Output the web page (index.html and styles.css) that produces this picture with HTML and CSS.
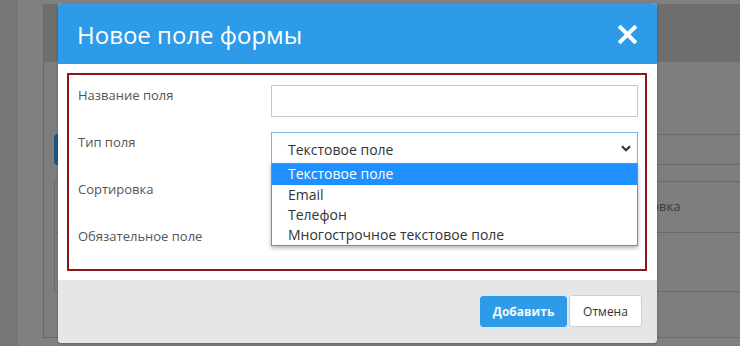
FILE: index.html
```html
<!DOCTYPE html>
<html lang="ru">
<head>
<meta charset="utf-8">
<title>Новое поле формы</title>
<link rel="stylesheet" href="styles.css">
</head>
<body>
<div class="page">
  <div class="sidebar"></div>
  <div class="main">
    <div class="panel">
      <div class="panel-head"></div>
      <div class="panel-body">
        <div class="tabs"><div class="tab-active"></div><div class="tab-rest"></div></div>
        <div class="table">
          <div class="trow trow-head"><div class="tcell tcell-first"></div><div class="tcell">Сортировка</div></div>
          <div class="trow trow-body"></div>
        </div>
      </div>
    </div>
  </div>
</div>

<div class="modal">
  <div class="modal-head">
    <h1 class="modal-title">Новое поле формы</h1>
    <button class="close" type="button" aria-label="Закрыть">
      <svg width="19" height="19" viewBox="0 0 19 19"><path d="M2.5 2.5 L16.5 16.5 M16.5 2.5 L2.5 16.5" stroke="#fff" stroke-width="4" stroke-linecap="square" fill="none"/></svg>
    </button>
  </div>
  <div class="modal-body">
    <div class="form-box">
      <div class="form-row"><label class="label">Название поля</label><input class="control" type="text"></div>
      <div class="form-row">
        <label class="label">Тип поля</label>
        <div class="select-wrap">
          <div class="control select"><span>Текстовое поле</span>
            <svg class="chev" width="10" height="7" viewBox="0 0 10 7"><path d="M1 1.2 L5 5.2 L9 1.2" stroke="#333" stroke-width="2.2" fill="none"/></svg>
          </div>
          <ul class="options">
            <li class="option option-active">Текстовое поле</li>
            <li class="option">Email</li>
            <li class="option">Телефон</li>
            <li class="option">Многострочное текстовое поле</li>
          </ul>
        </div>
      </div>
      <div class="form-row"><label class="label">Сортировка</label><input class="control" type="text"></div>
      <div class="form-row"><label class="label">Обязательное поле</label><div class="check-cell"><input class="check" type="checkbox"></div></div>
    </div>
  </div>
  <div class="modal-foot">
    <button class="btn btn-primary" type="button">Добавить</button>
    <button class="btn btn-default" type="button">Отмена</button>
  </div>
</div>
</body>
</html>
```

FILE: styles.css
```css
* { box-sizing: border-box; }
html, body { margin: 0; padding: 0; }
body {
  font-family: "Open Sans", "Liberation Sans", sans-serif;
  width: 740px;
  height: 346px;
  overflow: hidden;
  background: #808080;
  position: relative;
}

/* dimmed background page */
.page { display: flex; height: 346px; }
.sidebar { width: 18px; background: #767676; flex: none; }
.main { flex: 1; padding: 4px 0 0 25px; background: #808080; }
.panel {
  height: 334px;
  border-left: 1px solid #6a6a6a;
  border-bottom: 1px solid #6a6a6a;
  background: #7e7e7e;
}
.panel-head { height: 58px; background: #6e6e6e; }
.panel-body { padding: 72px 0 0 10px; }
.tabs { display: flex; height: 31px; }
.tab-active { width: 100px; height: 31px; background: #1f5783; border-radius: 4px; flex: none; }
.tab-rest { flex: 1; border-top: 1px solid #6a6a6a; border-bottom: 1px solid #6a6a6a; }
.table { margin-top: 16px; border: 1px solid #6a6a6a; border-right: none; }
.trow { display: flex; align-items: center; }
.trow-head { height: 51px; border-bottom: 1px solid #6a6a6a; }
.trow-body { height: 58px; }
.tcell { font-size: 13px; color: #3a3a3a; padding-bottom: 2px; }
.tcell-first { width: 550px; flex: none; }

/* modal */
.modal {
  position: absolute;
  left: 58px;
  top: 3px;
  width: 599px;
  height: 340px;
  background: #fff;
  border-radius: 4px;
  box-shadow: 0 1px 3px rgba(0,0,0,0.25);
}
.modal-head {
  height: 61px;
  background: #2e9be9;
  border-radius: 4px 4px 0 0;
  display: flex;
  align-items: center;
  justify-content: space-between;
  padding: 2px 20px 0 19px;
}
.modal-title {
  margin: 0;
  font-size: 24px;
  font-weight: 400;
  color: #fff;
  line-height: 30px;
}
.close {
  border: 0;
  background: none;
  padding: 0;
  width: 19px;
  height: 19px;
  display: block;
  cursor: pointer;
}
.close svg { display: block; }

.modal-body { height: 216px; padding: 9px 10px 9px 9px; }
.form-box {
  height: 198px;
  border: 2px solid #8c1717;
  padding: 10px 7px 0 9px;
  display: grid;
  grid-template-columns: 193px 367px;
  grid-auto-rows: 32px;
  row-gap: 15px;
}
.form-row { display: contents; }
.label {
  font-size: 13px;
  color: #555;
  line-height: 20px;
}
.control {
  width: 367px;
  height: 32px;
  border: 1px solid #c8c8c8;
  background: #fff;
  font: inherit;
  margin: 0;
}
.check-cell { height: 32px; }
.check { margin: 2px 0 0 0; width: 13px; height: 13px; display: block; }

.select-wrap { position: relative; }
.select {
  border-color: #79b5e6;
  display: flex;
  align-items: center;
  justify-content: space-between;
  padding: 0 6px 0 16px;
  font-size: 14px;
  color: #333;
}
.select span { padding-top: 2px; }
.chev { display: block; margin-top: 1px; }

.options {
  position: absolute;
  left: 0;
  top: 31px;
  width: 367px;
  margin: 0;
  padding: 0;
  list-style: none;
  background: #fff;
  border: 1px solid #8a8a8a;
  box-shadow: 0 2px 4px rgba(0,0,0,0.3);
  z-index: 5;
}
.option {
  height: 20px;
  line-height: 20px;
  padding-left: 16px;
  font-size: 14px;
  color: #333;
}
.option-active { background: #1e90ff; color: #fff; height: 21px; }

.modal-foot {
  height: 63px;
  background: #e5e6e8;
  border-radius: 0 0 4px 4px;
  display: flex;
  align-items: center;
  justify-content: flex-end;
  padding: 0 15px 1px 0;
  gap: 2px;
}
.btn {
  font-family: "Open Sans", "Liberation Sans", sans-serif;
  font-size: 12px;
  border-radius: 3px;
  cursor: pointer;
  margin: 0;
}
.btn-primary {
  width: 87px;
  height: 31px;
  background: #2e9be9;
  border: 1px solid #2e9be9;
  color: #f4f8fc;
  font-weight: 700;
}
.btn-default {
  width: 73px;
  height: 32px;
  background: #fff;
  border: 1px solid #cfcfcf;
  color: #333;
}
```
